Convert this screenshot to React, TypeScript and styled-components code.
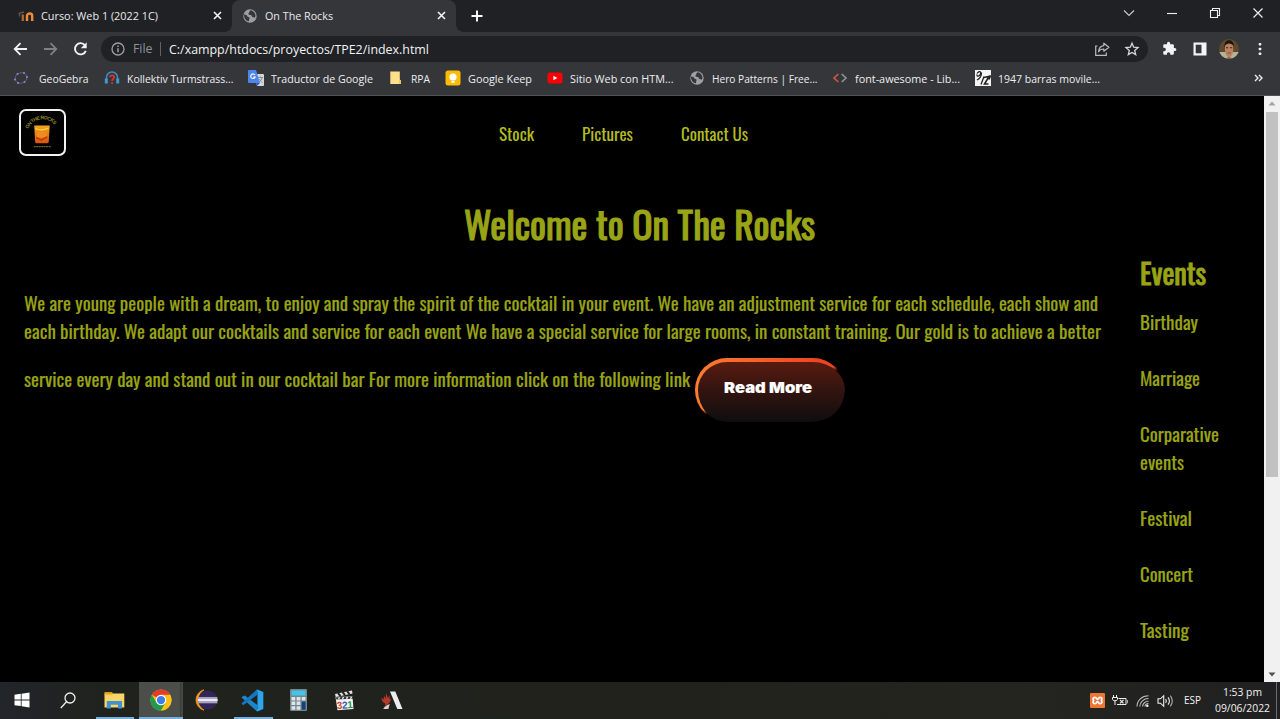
import React, { useLayoutEffect, useRef } from "react";
import styled, { createGlobalStyle } from "styled-components";

const GlobalStyle = createGlobalStyle`
  * { box-sizing: border-box; }
  html, body { margin: 0; padding: 0; background: #000; overflow: hidden; }
  svg { display: block; flex: none; }
`;

const ui = `"Segoe UI", "Open Sans", "Noto Sans", sans-serif`;
const display = `Oswald, Roboto, "Liberation Sans", sans-serif`;

/* ---------- text squeezed to a set measure ---------- */

const Measure = styled.span<{ $w: number }>`
  display: block;
  flex: none;
  width: ${(p) => p.$w}px;
  white-space: nowrap;
  text-align: left;
`;
const Squeezed = styled.span`
  display: inline-block;
  transform-origin: 0 50%;
  white-space: nowrap;
`;

function Fit({ w, children }: { w: number; children: React.ReactNode }) {
  const ref = useRef<HTMLSpanElement>(null);
  useLayoutEffect(() => {
    const el = ref.current;
    if (el && el.offsetWidth) {
      el.style.transform = "none";
      el.style.transform = `scaleX(${w / el.getBoundingClientRect().width})`;
    }
  }, [w, children]);
  return (
    <Measure $w={w}>
      <Squeezed ref={ref}>{children}</Squeezed>
    </Measure>
  );
}

/* ---------- browser chrome ---------- */

const Screen = styled.div`
  width: 1280px;
  height: 719px;
  display: flex;
  flex-direction: column;
  overflow: hidden;
  background: #000;
  font-family: ${ui};
`;

const TabStrip = styled.div`
  height: 32px;
  flex: none;
  display: flex;
  align-items: center;
  background: #202124;
  color: #e8eaed;
  font-size: 11.5px;
`;

const Tab = styled.div<{ $active?: boolean; $width: number; $pad: number }>`
  position: relative;
  width: ${(p) => p.$width}px;
  height: 32px;
  display: flex;
  align-items: center;
  gap: 7px;
  padding: 0 10px 1px ${(p) => p.$pad}px;
  border-radius: 8px 8px 0 0;
  background: ${(p) => (p.$active ? "#35363a" : "transparent")};
  ${(p) =>
    p.$active &&
    `&::before, &::after {
      content: ""; position: absolute; bottom: 0; width: 7px; height: 7px;
    }
    &::before { left: -7px; background: radial-gradient(circle at 0 0, transparent 6.5px, #35363a 7px); }
    &::after { right: -7px; background: radial-gradient(circle at 100% 0, transparent 6.5px, #35363a 7px); }`}
`;

const Push = styled.div`
  flex: 1;
`;

const NewTab = styled.div`
  padding-left: 15px;
`;

const WindowButtons = styled.div`
  display: flex;
  align-items: center;
  gap: 31px;
  padding: 0 16px 6px 0;
`;

const Toolbar = styled.div`
  height: 33px;
  flex: none;
  display: flex;
  align-items: center;
  padding: 0 0 0 12px;
  background: #35363a;
`;

const NavButtons = styled.div`
  display: flex;
  gap: 14px;
  width: 89px;
`;

const AddressBar = styled.div`
  width: 1047px;
  height: 26px;
  margin-top: 1px;
  border-radius: 13px;
  display: flex;
  align-items: center;
  padding: 0 8px 0 10px;
  background: #202124;
  color: #f1f3f4;
  font-size: 12.4px;
`;

const Scheme = styled.div`
  display: flex;
  padding: 0 7px 0 8px;
  margin-right: 8px;
  color: #8f9398;
  border-right: 1px solid #5f6368;
  line-height: 14px;
`;

const BarActions = styled.div`
  display: flex;
  gap: 14px;
`;

const ToolbarActions = styled.div`
  display: flex;
  align-items: center;
  gap: 16px;
  padding-left: 14px;
`;

const Profile = styled.div`
  margin: 0 3px 0 -4px;
`;

const Bookmarks = styled.div`
  height: 31px;
  flex: none;
  display: flex;
  align-items: center;
  gap: 15px;
  padding: 0 17px 4px 16px;
  background: #35363a;
  border-bottom: 1px solid #505256;
  color: #eceef0;
  font-size: 11.5px;
`;

const Bookmark = styled.div`
  display: flex;
  align-items: center;
  gap: 7px;
`;

/* ---------- web page ---------- */

const Viewport = styled.div`
  flex: 1;
  min-height: 0;
  display: flex;
`;

const Page = styled.div`
  width: 1264px;
  background: #000;
  color: #99a416;
  font-family: ${display};
  font-weight: 400;
  font-size: 18.75px;
  line-height: 28px;
`;

const Header = styled.header`
  height: 99px;
  display: flex;
  align-items: flex-start;
  padding: 12.5px 0 0 19px;
`;

const Logo = styled.div`
  width: 47px;
  height: 47px;
  border: 2px solid #f2f2f2;
  border-radius: 7px;
  overflow: hidden;
`;

const Menu = styled.nav`
  display: flex;
  gap: 48px;
  padding: 10.5px 0 0 433px;
  color: #b2bd1f;
  font-size: 17.6px;
`;

const Title = styled.h1`
  margin: 0 0 1px 464px;
  font-size: 37.5px;
  line-height: 56px;
  font-weight: 400;
  -webkit-text-stroke: 1.1px #99a416;
`;

const Columns = styled.div`
  display: flex;
`;

const Intro = styled.main`
  width: 1140px;
  padding: 37px 0 0 24px;
  -webkit-text-stroke: 0.15px;
`;

const LastLine = styled.div`
  display: flex;
  align-items: center;
  gap: 5px;
  height: 64px;
  margin-top: 13px;
`;

const LastWords = styled.div`
  height: 51px;
`;

const ReadMore = styled.button`
  width: 150px;
  height: 64px;
  padding: 0 0 9px 26px;
  display: flex;
  align-items: center;
  border: solid transparent;
  border-width: 4px 0 0 3px;
  border-radius: 32px;
  background:
    linear-gradient(#581b10, #34140f 45%, #0e0e0f) padding-box,
    linear-gradient(161.7deg, transparent 48%, #000 53%) border-box,
    linear-gradient(90deg, #ff7c30, #ec4420 85%) border-box;
  color: #fff;
  font: 900 15px "Arial Black", Inter, "Liberation Sans", sans-serif;
`;

const Events = styled.aside`
  -webkit-text-stroke: 0.15px;
`;

const EventsTitle = styled.h2`
  margin: 0 0 16px;
  font-size: 28.1px;
  line-height: 40px;
  font-weight: 400;
  -webkit-text-stroke: 0.9px #99a416;
`;

const EventItem = styled.div`
  margin-bottom: 28.1px;
`;

const Scrollbar = styled.div`
  width: 16px;
  display: flex;
  flex-direction: column;
  align-items: center;
  justify-content: space-between;
  background: #f1f1f1;
`;

const Thumb = styled.div`
  width: 12px;
  height: 365px;
  margin-bottom: 189px;
  background: #c1c1c1;
`;

const ScrollArrow = styled.div`
  height: 15px;
  display: flex;
  align-items: center;
`;

/* ---------- taskbar ---------- */

const Taskbar = styled.footer`
  height: 37px;
  flex: none;
  display: flex;
  background: linear-gradient(90deg, #22252a 0, #20221d 8%, #21221c 55%, #24251f 80%, #202022 100%);
  color: #f3f3f3;
`;

const TaskItem = styled.div<{ $open?: boolean; $focus?: boolean }>`
  width: 46.1px;
  display: flex;
  align-items: center;
  justify-content: center;
  position: relative;
  padding: 0 1.5px 1px 0;
  ${(p) =>
    p.$focus &&
    `background: linear-gradient(90deg, transparent 1px, #4c4e4a 1px, #4c4e4a 42px, #343632 42px, #454743 43px, #454743 45px, transparent 45px);`}
  &::after {
    content: "";
    position: absolute;
    bottom: 0;
    left: ${(p) => (p.$focus ? 1 : 4)}px;
    right: ${(p) => (p.$focus ? 1 : 4)}px;
    height: 2px;
    background: ${(p) => (p.$open ? "#76b0de" : "transparent")};
  }
`;

const Tray = styled.div`
  display: flex;
  align-items: center;
  font-size: 11.5px;
`;

const TrayIcons = styled.div`
  display: flex;
  align-items: center;
  gap: 7px;
  margin-right: 10px;
`;

const Language = styled.div`
  padding-bottom: 2px;
`;

const Clock = styled.div`
  display: flex;
  flex-direction: column;
  align-items: center;
  height: 37px;
  margin-left: 14px;
  padding-top: 2px;
  line-height: 16px;
`;

const ShowDesktop = styled.div`
  width: 4px;
  height: 37px;
  margin-left: 6px;
  border-left: 1px solid #6c6c6a;
`;

/* ---------- icons ---------- */

const Globe = () => (
  <svg width="16" height="16" viewBox="0 0 16 16">
    <circle cx="8" cy="8" r="6.7" fill="#9aa0a6" />
    <path d="M2 6.5c2 .2 3 .7 3.200 1.700.4 1 2 .6 2.300 1.500.4.900-.7 1.500-.5 3.500C4 13 1.900 10.500 2 6.500zM9 2.300c-1.200.5-1.800 1-1.700 1.900.1.700-1 .9-.900 1.700.1 1 1.800.6 2.700 1.200.8.600.5 1.700 1.500 2 1 .2 1.500.900 2.400.5C14.200 7 13 3.500 9 2.300z" fill="#35363a" />
  </svg>
);

const Close = () => (
  <svg width="9" height="9" viewBox="0 0 9 9" stroke="#f1f3f4" strokeWidth="1.6">
    <path d="M1 1l7 7M8 1L1 8" />
  </svg>
);

const MoodleIcon = () => (
  <svg width="16" height="12" viewBox="0 0 16 12" fill="none">
    <path d="M.5 3.500L6 2M1.500 3v3.500" stroke="#5c5450" strokeWidth="1.400" />
    <path d="M4.800 11V4.500" stroke="#b96a2b" strokeWidth="2.200" />
    <path d="M9 11V5.800c0-3 5.200-3 5.200 0V11" stroke="#ef8b35" strokeWidth="2.400" />
  </svg>
);

const bookmarkIcons: Record<string, React.ReactNode> = {
  geo: (
    <svg width="16" height="16" viewBox="3 0 16 16" overflow="visible">
      <ellipse cx="8" cy="8" rx="6" ry="5.200" fill="none" stroke="#5f5f6a" strokeWidth=".9" transform="rotate(-20 8 8)" />
      <g fill="#8c86f0">
        <circle cx="2" cy="9.500" r="1" /><circle cx="4.500" cy="4" r="1" /><circle cx="11" cy="3" r="1" />
        <circle cx="14" cy="7" r="1" /><circle cx="11.500" cy="12" r="1" /><circle cx="5" cy="13" r="1" />
      </g>
    </svg>
  ),
  head: (
    <svg width="16" height="16" viewBox="0 0 16 16" fill="none">
      <path d="M2.500 10V7.500a5.500 5.500 0 0111 0V10" stroke="#3c8fc0" strokeWidth="1.500" />
      <path d="M2.300 8.500v5M13.700 8.500v5" stroke="#3c9bd0" strokeWidth="3" />
      <path d="M6 7.300c0-2.600 4.200-2.600 4.200 0 0 1.600-2.100 1.700-2.100 3.700M8.100 12.300v1.800" stroke="#d8323a" strokeWidth="1.800" />
    </svg>
  ),
  translate: (
    <svg width="16" height="16" viewBox="0 0 16 16">
      <path d="M6 4h9a1 1 0 011 1v10a1 1 0 01-1 1H9z" fill="#d4d6da" />
      <path d="M10 7.500h5M12.500 6.500v1M14 8c-.5 2-2 3.500-3.500 4M11.500 9c.5 1.500 1.500 2.500 3 3.500" stroke="#7b848f" strokeWidth=".9" fill="none" />
      <path d="M1 0h7l4 13H1a1 1 0 01-1-1V1a1 1 0 011-1z" fill="#4f86ec" />
      <path d="M9 16l3-3H8z" fill="#2d56c0" />
      <path d="M7 5A2.300 2.300 0 107.200 7H5.200" stroke="#fff" strokeWidth="1.100" fill="none" />
    </svg>
  ),
  folder: (
    <svg width="16" height="16" viewBox="0 0 16 16">
      <path d="M2.300 1.500h9.500v8l1 1V14H2.300z" fill="#fbe08a" />
      <path d="M11 10h1.800v4H11z" fill="#efc95c" />
    </svg>
  ),
  keep: (
    <svg width="16" height="16" viewBox="0 0 16 16">
      <rect x="0.500" y="0.500" width="15" height="15" rx="2.500" fill="#fbbc04" />
      <circle cx="8" cy="7" r="3.600" fill="#fff" />
      <path d="M6.300 10.800h3.400v2H6.300z" fill="#fff" />
    </svg>
  ),
  youtube: (
    <svg width="16" height="16" viewBox="0 0 16 16">
      <rect x="0.500" y="2.500" width="15" height="11" rx="2.800" fill="#f00" />
      <path d="M6.400 5.700v4.600L10.400 8z" fill="#fff" />
    </svg>
  ),
  globe: <Globe />,
  code: (
    <svg width="16" height="16" viewBox="0 0 16 16" fill="none" strokeWidth="1.600">
      <path d="M6.300 4L2 8l4.300 4" stroke="#d4583c" />
      <path d="M9.700 4L14 8l-4.300 4" stroke="#909398" />
    </svg>
  ),
  bar: (
    <svg width="16" height="16" viewBox="0 0 16 16">
      <rect width="16" height="16" fill="#f4f4f4" />
      <path d="M2 3.500c2-3 4.500-2 3.500.5S1.500 7 2 4.500M6.500 2.500C6.500 6 5 8.500 2 10M9 6.500L6 14.500" stroke="#222" strokeWidth="1.300" fill="none" />
      <path d="M9 7.500l5-1-4.500 7.500h4M15.500 5.500l-1.500 4" stroke="#222" strokeWidth="1.600" fill="none" />
    </svg>
  ),
};

const bookmarks: [string, string, number][] = [
  ["geo", "GeoGebra", 49.5],
  ["head", "Kollektiv Turmstrass...", 106.5],
  ["translate", "Traductor de Google", 102],
  ["folder", "RPA", 19],
  ["keep", "Google Keep", 64],
  ["youtube", "Sitio Web con HTM...", 103.5],
  ["globe", "Hero Patterns | Free...", 105.5],
  ["code", "font-awesome - Lib...", 105],
  ["bar", "1947 barras movile...", 102],
];

const BackArrow = ({ color, flip }: { color: string; flip?: boolean }) => (
  <svg width="16" height="16" viewBox="0 0 16 16" fill="none" stroke={color} strokeWidth="1.800">
    <path d={flip ? "M2 8h12M8.500 2.200L14.300 8 8.500 13.800" : "M15 8H3M8.500 2.200L2.700 8l5.800 5.800"} />
  </svg>
);

const Reload = () => (
  <svg width="16" height="16" viewBox="0 0 16 16">
    <path d="M13 4.300A5.600 5.600 0 1013.800 9.800" fill="none" stroke="#f1f3f4" strokeWidth="1.900" />
    <path d="M14.700 1.300v5.900H8.800z" fill="#f1f3f4" />
  </svg>
);

const Info = () => (
  <svg width="14" height="14" viewBox="0 0 14 14" fill="none" stroke="#9aa0a6" strokeWidth="1.300">
    <circle cx="7" cy="7" r="6" />
    <path d="M7 6.200v4M7 3.500v1.400" strokeWidth="1.500" />
  </svg>
);

const Share = () => (
  <svg width="16" height="16" viewBox="0 0 16 16" fill="none" stroke="#b8bbbf" strokeWidth="1.200">
    <path d="M3.500 5H1.700v9.300h10.600V11.500" />
    <path d="M9.800 2.200L14.900 6.300 9.800 10.200V8C7.300 8 5.600 8.800 4.600 10.800 4.800 7.500 6.800 5 9.800 4.600z" strokeLinejoin="round" />
  </svg>
);

const Star = () => (
  <svg width="16" height="16" viewBox="0 0 16 16" fill="none" stroke="#d5d7da" strokeWidth="1.300">
    <path d="M8 2.200l1.700 4 4.300.4-3.300 2.800 1 4.200L8 11.400l-3.700 2.200 1-4.200L2 6.600l4.300-.4z" />
  </svg>
);

const Puzzle = () => (
  <svg width="15" height="15" viewBox="0 0 24 24" fill="#f1f3f4">
    <path d="M20.500 11H19V7a2 2 0 00-2-2h-4V3.500a2.500 2.500 0 00-5 0V5H4a2 2 0 00-2 2v3.800h1.500a2.700 2.700 0 010 5.400H2V20a2 2 0 002 2h3.800v-1.500a2.700 2.700 0 015.400 0V22H17a2 2 0 002-2v-4h1.500a2.500 2.500 0 000-5z" />
  </svg>
);

const SidePanel = () => (
  <svg width="14" height="14" viewBox="0 0 14 14">
    <path d="M.5.500h13v13H.5z" fill="#f4f5f6" />
    <path d="M2.700 2.700h5.800v8.600H2.700z" fill="#35363a" />
  </svg>
);

const Avatar = () => (
  <svg width="20" height="20" viewBox="0 0 20 20">
    <defs>
      <clipPath id="face"><circle cx="10" cy="10" r="10" /></clipPath>
    </defs>
    <g clipPath="url(#face)">
      <rect width="20" height="20" fill="#5c4a2b" />
      <path d="M0 13h20v7H0z" fill="#b5b29c" />
      <path d="M5.500 8C4.500-1 15.500-1 14.700 8z" fill="#20140e" />
      <path d="M6 6.500q4-4 8.200 0V12q-1 6-4.100 6.200Q7 18 6 12z" fill="#b88263" />
      <path d="M7 8.700h2.200M11 8.700h2.200" stroke="#3f2419" strokeWidth="1.100" />
      <path d="M8.500 14h3.200" stroke="#7a4535" strokeWidth=".9" />
      <path d="M5 20.500q5-4.500 10 0z" fill="#7c5340" />
    </g>
  </svg>
);

const Dots = () => (
  <svg width="4" height="14" viewBox="0 0 4 14" fill="#f1f3f4">
    <rect x=".7" y="1" width="2.600" height="2.600" rx=".8" />
    <rect x=".7" y="5.700" width="2.600" height="2.600" rx=".8" />
    <rect x=".7" y="10.400" width="2.600" height="2.600" rx=".8" />
  </svg>
);

const LogoArt = () => (
  <svg width="43" height="43" viewBox="0.8 0 43 43">
    <defs>
      <linearGradient id="whisky" x1="0" y1="0" x2="0" y2="1">
        <stop offset="0" stopColor="#f6a51a" />
        <stop offset="1" stopColor="#d8550c" />
      </linearGradient>
      <path id="arc" d="M8 18A15.500 15.500 0 0137 18.500" />
    </defs>
    <text fill="#8f8b28" fontFamily="Liberation Sans" fontWeight="700" fontSize="5">
      <textPath href="#arc" textLength="32">ON THE ROCKS</textPath>
    </text>
    <path d="M14 14.500h15.500l-1 16.500q-.2 1.200-1.500 1.200H16.500q-1.300 0-1.500-1.200z" fill="url(#whisky)" />
    <path d="M15 17.500q6.500 3 13.500-.5" stroke="#ffd04a" strokeWidth="1.200" fill="none" />
    <path d="M16 23l5-3 6 2.500-1 3.500-5 1-4-1z" fill="#f28a22" />
    <path d="M16 26.500l5 2.500 6-3" stroke="#c23a0a" strokeWidth="1.800" fill="none" />
    <path d="M13.500 35.700h17" stroke="#8f7c2a" strokeWidth="1" strokeDasharray="2 .5" />
  </svg>
);

const WindowsLogo = () => (
  <svg width="16" height="16" viewBox="0 0 16 16" fill="#fff">
    <path d="M.5 2.700l6.300-.9v5.700H.5zM7.600 1.700L15.500.5v7H7.600zM.5 8.400h6.300v5.700l-6.300-.9zM7.600 8.400h7.900v7l-7.900-1.100z" />
  </svg>
);

const Search = () => (
  <svg width="16" height="17" viewBox="0 0 16 17" fill="none" stroke="#eee" strokeWidth="1.300">
    <circle cx="10" cy="6" r="5" />
    <path d="M6.500 9.700L.8 16" />
  </svg>
);

const Explorer = () => (
  <svg width="21" height="18" viewBox="0 0 21 18">
    <path d="M.5 1h7.500l1 1.500H.5z" fill="#d99a1b" />
    <path d="M.5 2.500h19.800V16.500H.5z" fill="#fbd568" />
    <path d="M.5 2.300h8v2h-8z" fill="#efb62f" opacity=".7" />
    <path d="M2.800 10h15.200v7.500h-4v-3.800H6.800v3.800h-4z" fill="#3f93d2" />
  </svg>
);

const Chrome = () => (
  <svg width="22" height="22" viewBox="0 0 24 24">
    <circle cx="12" cy="12" r="11.500" fill="#fbc116" />
    <path d="M2 6.300A11.500 11.500 0 0122 6.300L12 12z" fill="#e33b2e" />
    <path d="M2 6.250A11.500 11.500 0 0012 23.500l5-8.600L7 14.900z" fill="#229a4c" />
    <path d="M12 6.300h10A11.500 11.500 0 0112 23.500l5-8.600z" fill="#fbc116" />
    <circle cx="12" cy="12" r="5.700" fill="#fff" />
    <circle cx="12" cy="12" r="4.500" fill="#3f7ee8" />
  </svg>
);

const Eclipse = () => (
  <svg width="23" height="22" viewBox="0 0 23 22">
    <path d="M9 .8A10.500 10.500 0 009 21.200 12 12 0 019 .800z" fill="#f29521" stroke="#f29521" strokeWidth=".8" />
    <circle cx="12.800" cy="11" r="9.600" fill="#322659" />
    <path d="M3.200 8h19.200v6.300H3.200z" fill="#a9a4c2" />
    <path d="M3 10.200h19.600v1.600H3z" fill="#fff" />
  </svg>
);

const VSCode = () => (
  <svg width="23" height="23" viewBox="0 0 24 24">
    <path d="M17 .8l-13 13.500-2.200 2L.6 15l16-14.500z" fill="#1470b4" />
    <path d="M1.800 7.500L.5 8.800l15.500 14 1.500-5.800L4 6.800z" fill="#1b86cc" />
    <path d="M17 0.500L23.300 3.200v17.600L17 23.500 15.700 22.500 17.200 20V4L15.700 1.500z" fill="#2ca5ee" />
    <path d="M.6 15l1.700 1.900 14.900-11V.5z" fill="#1577bd" />
  </svg>
);

const Calc = () => (
  <svg width="17" height="22" viewBox="0 0 17 22">
    <rect width="17" height="22" rx="1" fill="#73868f" />
    <path d="M1.500 1.500h14v5h-14z" fill="#47c3e6" />
    <g fill="#dfe5e8">
      <path d="M1.500 8h3.800v3.500H1.500zM6.600 8h3.800v3.500H6.600zM11.700 8h3.800v3.500h-3.800zM1.500 12.600h3.800v3.500H1.500zM6.600 12.600h3.800v3.500H6.600zM1.500 17.200h3.800v3.500H1.500zM6.600 17.200h3.800v3.500H6.600z" />
    </g>
    <path d="M11.700 12.600h3.800v8.100h-3.800z" fill="#173f7c" />
  </svg>
);

const Clapper = () => (
  <svg width="21" height="21" viewBox="0 0 21 21">
    <path d="M1 4L18 .5l.5 3L1.800 7z" fill="#e6e6e6" />
    <path d="M4 3.200l2.500 2.800M8.500 2.200L11 5M13 1.200L15.500 4" stroke="#222" strokeWidth="2" />
    <path d="M1.500 7L18.500 6.500l1 12.500-16 1.300z" fill="#f3f3f3" />
    <path d="M2 7.300l17-.6.1 2-16.800.8z" fill="#333" />
    <path d="M5.500 7.200l-1 2M9.500 7l-1 2M13.500 6.900l-1 2M17.500 6.700l-1 2" stroke="#eee" strokeWidth="1.400" />
    <g fontFamily="Liberation Sans" fontWeight="700" fontSize="10" transform="rotate(-4 10 18)">
      <text x="3" y="18.500" fill="#d2441c">3</text>
      <text x="8.200" y="18.500" fill="#2e64b8">2</text>
      <text x="13.400" y="18.500" fill="#3a9442">1</text>
    </g>
  </svg>
);

const Arena = () => (
  <svg width="23" height="19" viewBox="0 0 23 19">
    <path d="M10 .5h5.300L22.500 18h-5.200z" fill="#ececec" />
    <path d="M9.800 13L8.300 18H3.200l2-3z" fill="#d5d5d5" />
    <path d="M1.500 6.500l2.200 2L4 4.500l1.500 3L6.500 2l1.200 5L9.700 4.500l-.2 4L11 7.500c0 2.500-1.500 4.500-3 5.500L5.500 16l-.3-3.500C3 12 1.500 9.500 1.500 6.500z" fill="#b5392b" />
  </svg>
);

const Xampp = () => (
  <svg width="15" height="15" viewBox="0 0 15 15">
    <rect width="15" height="15" rx="1" fill="#ee7637" />
    <path d="M5 4.300c-2.500 0-2.500 2.800-.8 3.200-1.700.4-1.700 3.200.8 3.200 1.800 0 1.500-2.200 2.500-2.200s.7 2.200 2.500 2.200c2.500 0 2.500-2.800.8-3.200 1.700-.4 1.700-3.200-.8-3.200-1.800 0-1.500 2.200-2.500 2.200S6.800 4.300 5 4.300z" fill="none" stroke="#fff" strokeWidth="1.700" />
  </svg>
);

const Battery = () => (
  <svg width="17" height="14" viewBox="0 0 17 14" fill="none" stroke="#eee" strokeWidth="1">
    <path d="M1.500 1v2.500M4.500 1v2.500M.5 3.500h5v1.800c0 2-5 2-5 0zM3 6.800V11" />
    <path d="M6.500 4.500h7.500v6h-9" />
    <path d="M15.500 6v3h-1.200" stroke="#aaa" />
    <path d="M8 5.800l3.500 3.500M11.500 5.800L8 9.300" strokeWidth="1.200" />
  </svg>
);

const Wifi = () => (
  <svg width="14" height="14" viewBox="0 0 14 14" fill="none" stroke="#bdbdbd" strokeWidth="1.100">
    <path d="M1 12.500C1 6.500 6 1.800 12.500 1.800M3.800 12.500c0-4.500 4-8 8.700-8M6.600 12.500c0-3 2.700-5.300 5.900-5.300M9 12.500c0-1.800 1.600-3 3.500-3" />
    <circle cx="11.300" cy="11.800" r="1.200" fill="#fff" stroke="none" />
  </svg>
);

const Sound = () => (
  <svg width="17" height="14" viewBox="0 0 17 14" fill="none" stroke="#eee" strokeWidth="1.100">
    <path d="M1 4.800h2.500L6.700 1.700v10.600L3.500 9.200H1z" />
    <path d="M8.700 5q1.300 2 0 4M11 3.300q2.800 3.700 0 7.400" />
    <path d="M13.300 1.700q4 5.300 0 10.600" stroke="#aaa" />
  </svg>
);

const events: [string, number][][] = [
  [["Birthday", 58]],
  [["Marriage", 60]],
  [["Corparative", 79], ["events", 44]],
  [["Festival", 52]],
  [["Concert", 53]],
  [["Tasting", 49]],
];

export default function App() {
  return (
    <Screen>
      <GlobalStyle />
      <TabStrip>
        <Tab $width={232} $pad={18}>
          <MoodleIcon />
          <Fit w={117}>Curso: Web 1 (2022 1C)</Fit>
          <Push />
          <Close />
        </Tab>
        <Tab $active $width={224} $pad={10}>
          <Globe />
          <Fit w={68}>On The Rocks</Fit>
          <Push />
          <Close />
        </Tab>
        <NewTab>
          <svg width="12" height="12" viewBox="0 0 12 12" stroke="#fff" strokeWidth="1.900">
            <path d="M6 .5v11M.5 6h11" />
          </svg>
        </NewTab>
        <Push />
        <WindowButtons>
          <svg width="12" height="12" viewBox="0 0 12 12" fill="none" stroke="#ccc" strokeWidth="1.100"><path d="M1 3.500l5 5 5-5" /></svg>
          <svg width="12" height="12" viewBox="0 0 12 12" stroke="#eee" strokeWidth="1.100"><path d="M1 6.500h10" /></svg>
          <svg width="12" height="12" viewBox="0 0 12 12" fill="none" stroke="#eee" strokeWidth="1.100"><path d="M1.500 3.500h7v7h-7zM3.500 3.500v-2h7v7h-2" /></svg>
          <svg width="12" height="12" viewBox="0 0 12 12" stroke="#eee" strokeWidth="1.200"><path d="M1.500 1.500l9 9M10.500 1.500l-9 9" /></svg>
        </WindowButtons>
      </TabStrip>
      <Toolbar>
        <NavButtons>
          <BackArrow color="#f1f3f4" />
          <BackArrow color="#7d8085" flip />
          <Reload />
        </NavButtons>
        <AddressBar>
          <Info />
          <Scheme><Fit w={19.5}>File</Fit></Scheme>
          <Fit w={260}>C:/xampp/htdocs/proyectos/TPE2/index.html</Fit>
          <Push />
          <BarActions>
            <Share />
            <Star />
          </BarActions>
        </AddressBar>
        <ToolbarActions>
          <Puzzle />
          <SidePanel />
          <Profile><Avatar /></Profile>
          <Dots />
        </ToolbarActions>
      </Toolbar>
      <Bookmarks>
        {bookmarks.map(([icon, label, w]) => (
          <Bookmark key={label}>
            {bookmarkIcons[icon]}
            <Fit w={w}>{label}</Fit>
          </Bookmark>
        ))}
        <Push />
        <svg width="9" height="8" viewBox="0 0 9 8" fill="none" stroke="#eee" strokeWidth="1.400"><path d="M1 1l3 3-3 3M5 1l3 3-3 3" /></svg>
      </Bookmarks>

      <Viewport>
        <Page>
          <Header>
            <Logo><LogoArt /></Logo>
            <Menu>
              <Fit w={35}>Stock</Fit>
              <Fit w={51}>Pictures</Fit>
              <Fit w={67}>Contact Us</Fit>
            </Menu>
          </Header>
          <Title><Fit w={351}>Welcome to On The Rocks</Fit></Title>
          <Columns>
            <Intro>
              <Fit w={1074}>We are young people with a dream, to enjoy and spray the spirit of the cocktail in your event. We have an adjustment service for each schedule, each show and</Fit>
              <Fit w={1077}>each birthday. We adapt our cocktails and service for each event We have a special service for large rooms, in constant training. Our gold is to achieve a better</Fit>
              <LastLine>
                <LastWords><Fit w={666}>service every day and stand out in our cocktail bar For more information click on the following link</Fit></LastWords>
                <ReadMore><Fit w={88}>Read More</Fit></ReadMore>
              </LastLine>
            </Intro>
            <Events>
              <EventsTitle><Fit w={66}>Events</Fit></EventsTitle>
              {events.map((lines) => (
                <EventItem key={lines[0][0]}>
                  {lines.map(([word, w]) => <Fit key={word} w={w}>{word}</Fit>)}
                </EventItem>
              ))}
            </Events>
          </Columns>
        </Page>
        <Scrollbar>
          <ScrollArrow><svg width="8" height="5" viewBox="0 0 8 5"><path d="M.5 4.500h7L4 .5z" fill="#a3a3a3" /></svg></ScrollArrow>
          <Thumb />
          <ScrollArrow><svg width="8" height="5" viewBox="0 0 8 5"><path d="M.5.500h7L4 4.500z" fill="#505050" /></svg></ScrollArrow>
        </Scrollbar>
      </Viewport>

      <Taskbar>
        <TaskItem><WindowsLogo /></TaskItem>
        <TaskItem><Search /></TaskItem>
        <TaskItem $open><Explorer /></TaskItem>
        <TaskItem $open $focus><Chrome /></TaskItem>
        <TaskItem><Eclipse /></TaskItem>
        <TaskItem $open><VSCode /></TaskItem>
        <TaskItem><Calc /></TaskItem>
        <TaskItem><Clapper /></TaskItem>
        <TaskItem><Arena /></TaskItem>
        <Push />
        <Tray>
          <TrayIcons>
            <Xampp />
            <Battery />
            <Wifi />
            <Sound />
          </TrayIcons>
          <Language><Fit w={17}>ESP</Fit></Language>
          <Clock>
            <Fit w={39}>1:53 pm</Fit>
            <Fit w={55}>09/06/2022</Fit>
          </Clock>
          <ShowDesktop />
        </Tray>
      </Taskbar>
    </Screen>
  );
}
